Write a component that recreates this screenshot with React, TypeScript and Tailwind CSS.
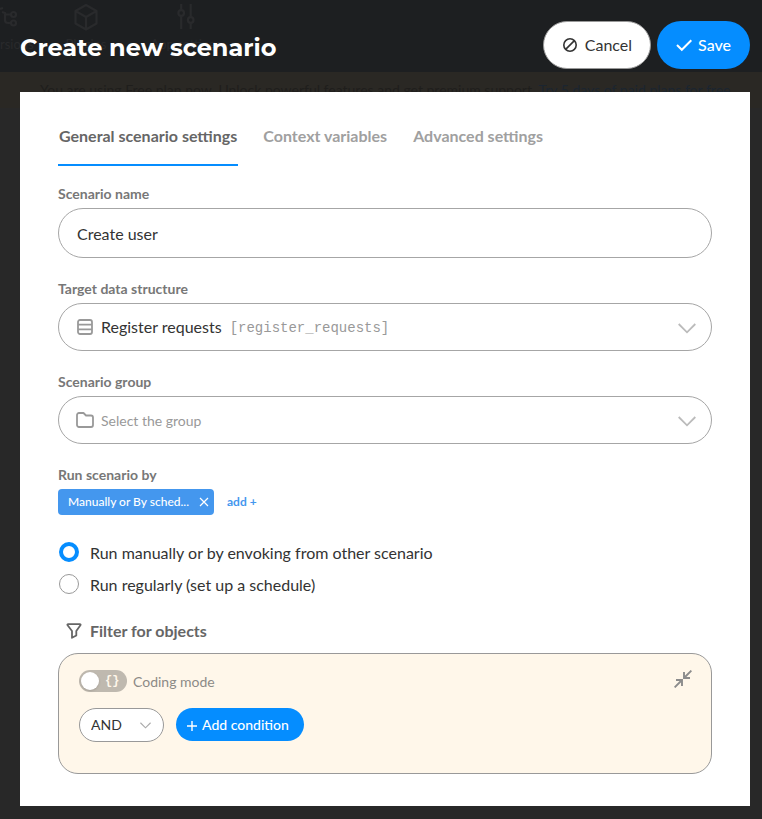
import { useState, type ReactNode } from "react";

function Chevron({ className }: { className: string }) {
  return (
    <svg className={className} viewBox="0 0 18 11" fill="none" stroke="currentColor" strokeWidth="1.8" aria-hidden="true">
      <path d="M.7 1 9 9.300 17.300 1" />
    </svg>
  );
}

function Backdrop() {
  return (
    <div className="absolute inset-0 -z-10 overflow-hidden bg-[#282828]" aria-hidden="true">
      <div className="flex h-[72px] bg-[#1d1f21] pt-1 text-[13px] leading-5 text-[#292a2c]">
        <div className="flex w-9 flex-col gap-0.5">
          <svg className="h-7 w-5" viewBox="0 0 20 28" fill="none" stroke="currentColor" strokeWidth="2.2">
            <path d="M0 5 3 4M2 8l3 1v7q0 3 3 3h3M5 10.500h6" />
            <circle cx="13.500" cy="10.500" r="2.500" />
            <circle cx="13.500" cy="19" r="2.500" />
          </svg>
          <span>rsions</span>
        </div>
        <div className="ml-7 flex w-11 flex-col items-center gap-0.5">
          <svg className="h-7 w-7" viewBox="0 0 28 28" fill="none" stroke="currentColor" strokeWidth="2.2" strokeLinejoin="round">
            <path d="M14 1 24.500 7v12.500L14 25.500 3.500 19.500V7zM3.500 7 14 13l10.500-6M14 13v12.500" />
          </svg>
          <span>Plugins</span>
        </div>
        <div className="ml-[38px] flex w-20 flex-col items-center gap-0.5">
          <svg className="h-7 w-7" viewBox="0 0 28 28" fill="none" stroke="currentColor" strokeWidth="2.2">
            <path d="M9.200 0v6M9.200 12v13M18.700 0v13M18.700 19v6" />
            <circle cx="9.200" cy="9" r="2.800" />
            <circle cx="18.700" cy="16" r="2.800" />
          </svg>
          <span className="whitespace-nowrap">App settings</span>
        </div>
      </div>
      <p className="h-9 whitespace-nowrap bg-[#2a2824] pl-10 pt-2 text-[14px] leading-5 text-[#1f1e1c]">
        You are using Free plan now. Unlock powerful features and get premium support.{" "}
        <span className="text-[#1b2530]">Try 5 days of paid plans for free</span>
      </p>
    </div>
  );
}

function Field({ label, htmlFor, children }: { label: string; htmlFor: string; children: ReactNode }) {
  return (
    <div>
      <label htmlFor={htmlFor} className="mb-1 block text-[14px] font-bold leading-5 text-[#777]">
        {label}
      </label>
      {children}
    </div>
  );
}

const tabs = ["General scenario settings", "Context variables", "Advanced settings"];
const modes = ["Run manually or by envoking from other scenario", "Run regularly (set up a schedule)"];

export default function App() {
  const [tab, setTab] = useState(0);
  const [mode, setMode] = useState(0);
  const [coding, setCoding] = useState(false);

  return (
    <div className="relative isolate min-h-screen pb-[13px] pl-5 pr-3 font-['Lato','Liberation_Sans',sans-serif] text-[#333]">
      <Backdrop />
      <header className="flex items-center justify-between pb-[23px] pt-[21px]">
        <h1 className="pt-1.5 font-['Montserrat','Inter',sans-serif] text-[24px] font-bold leading-8 text-white">Create new scenario</h1>
        <div className="flex gap-1.5">
          <button className="flex h-12 items-center gap-[7px] rounded-full border border-[#999] bg-white px-[18px] text-[16px]">
            <svg className="h-4 w-4" viewBox="0 0 16 16" fill="none" stroke="currentColor" strokeWidth="1.6" aria-hidden="true">
              <circle cx="8" cy="8" r="6.200" />
              <path d="M3.600 12.400 12.400 3.600" />
            </svg>
            Cancel
          </button>
          <button className="flex h-12 items-center gap-1.5 rounded-full bg-[#058dff] px-[19px] text-[16px] font-medium text-white">
            <svg className="h-4 w-4" viewBox="0 0 16 16" fill="none" stroke="currentColor" strokeWidth="2" aria-hidden="true">
              <path d="M1 8l4.800 4.800L15.300 3.300" />
            </svg>
            Save
          </button>
        </div>
      </header>

      <main className="bg-white px-[38px] pb-8 pt-[34px]">
        <div role="tablist" className="mb-[18px] flex gap-6">
          {tabs.map((name, i) => (
            <button
              key={name}
              role="tab"
              aria-selected={tab === i}
              onClick={() => setTab(i)}
              className={`border-b-2 px-px pb-[18px] text-[16px] font-bold leading-5 ${tab === i ? "border-[#058dff] text-[#666]" : "border-transparent text-[#a0a0a0]"}`}
            >
              {name}
            </button>
          ))}
        </div>

        <div className="flex flex-col gap-[21px]">
          <Field label="Scenario name" htmlFor="name">
            <input id="name" defaultValue="Create user" className="block h-[50px] w-full rounded-full border border-[#a6a6a6] px-[18px] text-[16px] outline-none" />
          </Field>

          <Field label="Target data structure" htmlFor="structure">
            <div className="flex h-12 items-center rounded-full border border-[#a6a6a6] pl-[18px] pr-[15px]">
              <svg className="mr-2 h-4 w-4 shrink-0 text-[#999]" viewBox="0 0 16 16" fill="none" stroke="currentColor" strokeWidth="1.8" aria-hidden="true">
                <rect x="1" y="1" width="14" height="14" rx="2" />
                <path d="M1 5.700h14M1 10.300h14" />
              </svg>
              <select id="structure" className="appearance-none bg-transparent text-[16px] outline-none [field-sizing:content]">
                <option>Register requests</option>
              </select>
              <span className="ml-2 pt-0.5 font-['Liberation_Mono',monospace] text-[14px] leading-5 text-[#999]">[register_requests]</span>
              <Chevron className="ml-auto mt-[3px] h-[11px] w-[18px] text-[#bbb]" />
            </div>
          </Field>

          <Field label="Scenario group" htmlFor="group">
            <div className="flex h-12 items-center rounded-full border border-[#a6a6a6] pl-[17px] pr-[15px]">
              <svg className="mr-[7px] h-4 w-[18px] shrink-0 text-[#999]" viewBox="0 0 18 16" fill="none" stroke="currentColor" strokeWidth="1.8" strokeLinejoin="round" aria-hidden="true">
                <path d="M3 1h4.500l2.500 2.500h5a2 2 0 0 1 2 2V13a2 2 0 0 1-2 2H3a2 2 0 0 1-2-2V3a2 2 0 0 1 2-2z" />
              </svg>
              <select id="group" className="flex-1 appearance-none bg-transparent text-[14px] text-[#999] outline-none">
                <option>Select the group</option>
              </select>
              <Chevron className="mt-[3px] h-[11px] w-[18px] text-[#bbb]" />
            </div>
          </Field>

          <div>
            <h2 className="mb-1 text-[14px] font-bold leading-5 text-[#777]">Run scenario by</h2>
            <div className="flex items-center gap-[13px]">
              <span className="flex h-[26px] items-center gap-2.5 rounded-[4px] bg-[#4497ee] pl-2.5 pr-[5px] text-[12px] font-medium text-white">
                Manually or By sched...
                <button aria-label="Remove">
                  <svg className="h-2.5 w-2.5" viewBox="0 0 10 10" fill="none" stroke="currentColor" strokeWidth="1.2" aria-hidden="true">
                    <path d="M1 1l8 8M9 1 1 9" />
                  </svg>
                </button>
              </span>
              <button className="text-[12px] font-bold text-[#4497ee]">add +</button>
            </div>
          </div>

          <fieldset>
            {modes.map((text, i) => (
              <label key={text} className="flex h-8 items-center gap-[11px] text-[16px]">
                <input
                  type="radio"
                  name="mode"
                  checked={mode === i}
                  onChange={() => setMode(i)}
                  className="ml-px h-5 w-5 appearance-none rounded-full border border-[#999] bg-white checked:border-4 checked:border-[#058dff]"
                />
                <span className="pt-0.5">{text}</span>
              </label>
            ))}
          </fieldset>

          <section>
            <h2 className="mb-3 flex items-center gap-2 pl-2 text-[16px] font-bold leading-5 text-[#666]">
              <svg className="h-4 w-4" viewBox="0 0 16 16" fill="none" stroke="currentColor" strokeWidth="1.8" strokeLinejoin="round" aria-hidden="true">
                <path d="M2.200 1.200h11.600q1.200 0 .6 1L10.300 8v4.500L6 14.800V8L1.600 2.200q-.6-1 .6-1z" />
              </svg>
              Filter for objects
            </h2>
            <div className="rounded-[20px] border border-[#999] bg-[#fff7ea] px-5 pb-[31px] pt-4">
              <div className="mb-4 flex items-start justify-between">
                <label className="flex items-center gap-1.5 text-[14px] leading-5 text-[#8c8a86]">
                  <input type="checkbox" role="switch" className="peer sr-only" checked={coding} onChange={() => setCoding(!coding)} />
                  <span className="flex h-[22px] w-12 items-center gap-1.5 rounded-full bg-[#bfb9af] px-0.5 font-['Liberation_Mono',monospace] text-[12px] font-bold text-[#fff7ea] peer-checked:flex-row-reverse peer-checked:bg-[#058dff]">
                    <span className="h-[18px] w-[18px] rounded-full bg-white shadow" />
                    {"{}"}
                  </span>
                  <span className="pt-0.5">Coding mode</span>
                </label>
                <button aria-label="Collapse" className="-mr-px text-[#8c8c8c]">
                  <svg className="h-[18px] w-[18px]" viewBox="0 0 18 18" fill="none" stroke="currentColor" strokeWidth="1.9" aria-hidden="true">
                    <path d="M17.400.600 10.500 7.500M10 2v6h6M.600 17.400 7.500 10.500M2 10h6v6" />
                  </svg>
                </button>
              </div>
              <div className="flex gap-3">
                <div className="flex h-[34px] w-[85px] items-center rounded-full border border-[#999] bg-white pl-[11px] pr-3">
                  <select aria-label="Operator" className="min-w-0 flex-1 appearance-none bg-transparent pb-0.5 text-[14px] outline-none">
                    <option>AND</option>
                    <option>OR</option>
                  </select>
                  <Chevron className="h-[7px] w-[11px] text-[#aaa]" />
                </div>
                <button className="flex h-[33px] items-center gap-[5px] rounded-full bg-[#058dff] pl-[11px] pr-[15px] text-[14px] font-medium text-white">
                  <svg className="mt-0.5 h-2.5 w-2.5" viewBox="0 0 10 10" fill="none" stroke="currentColor" strokeWidth="1.4" aria-hidden="true">
                    <path d="M5 0v10M0 5h10" />
                  </svg>
                  Add condition
                </button>
              </div>
            </div>
          </section>
        </div>
      </main>
    </div>
  );
}
